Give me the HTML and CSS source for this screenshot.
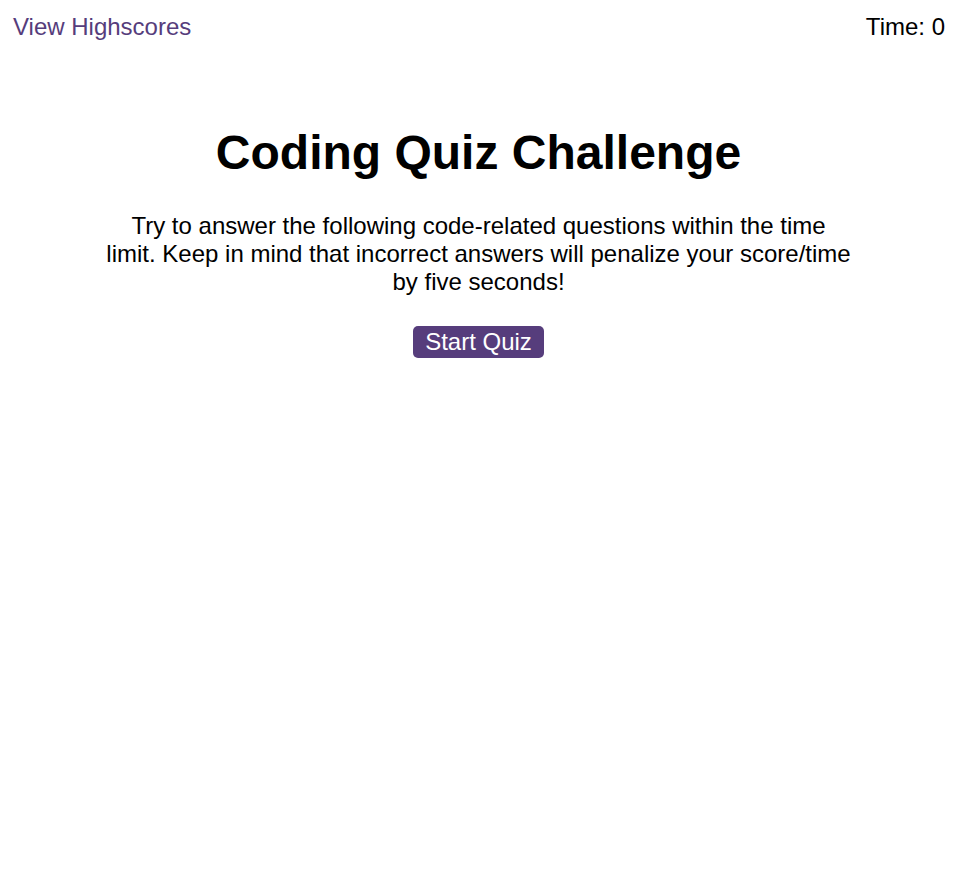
FILE: index.html
```html
<!DOCTYPE html>
<html lang="en">
<head>
<meta charset="utf-8">
<title>Coding Quiz Challenge</title>
<link rel="stylesheet" href="styles.css">
</head>
<body>
<header class="topbar">
  <a class="highscores" href="#">View Highscores</a>
  <div class="timer">Time: <span>0</span></div>
</header>
<main class="intro">
  <h1 class="title">Coding Quiz Challenge</h1>
  <p class="desc">Try to answer the following code-related questions within the time limit. Keep in mind that incorrect answers will penalize your score/time by five seconds!</p>
  <button class="start" type="button">Start Quiz</button>
</main>
</body>
</html>
```
FILE: styles.css
```css
html, body {
  margin: 0;
  padding: 0;
  background: #ffffff;
  font-family: "Liberation Sans", Arial, sans-serif;
  color: #000;
}
.topbar {
  display: flex;
  justify-content: space-between;
  align-items: center;
  padding: 13px 12px 0 13px;
  font-size: 24px;
}
.highscores {
  color: #563d7c;
  text-decoration: none;
}
.timer {
  color: #000;
}
.intro {
  display: flex;
  flex-direction: column;
  align-items: center;
  text-align: center;
}
.title {
  margin: 84px 0 0;
  font-size: 48px;
  font-weight: bold;
}
.desc {
  max-width: 746px;
  margin: 32px 0 0;
  font-size: 24px;
}
.start {
  margin-top: 30px;
  font-family: inherit;
  font-size: 24px;
  line-height: 28px;
  padding: 2px 12px;
  color: #fff;
  background: #563d7c;
  border: none;
  border-radius: 5px;
}
```
